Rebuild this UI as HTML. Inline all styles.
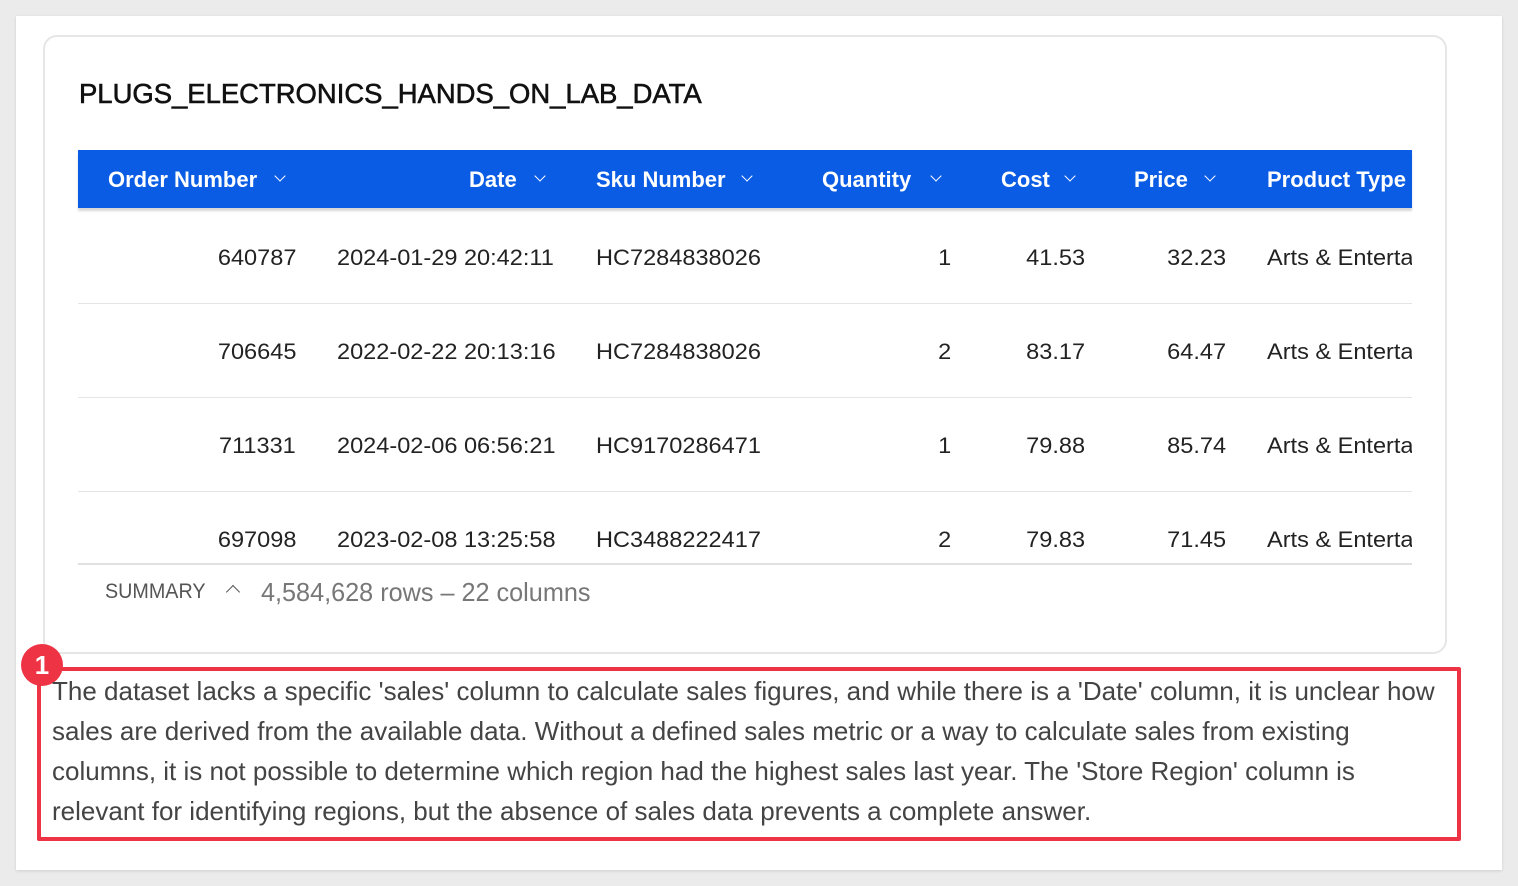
<!DOCTYPE html>
<html><head><meta charset="utf-8"><style>
*{margin:0;padding:0;box-sizing:border-box}
body{width:1518px;height:886px;background:#ebebeb;position:relative;overflow:hidden;font-family:"Liberation Sans",sans-serif}
.panel{position:absolute;left:16px;top:16px;width:1486px;height:854px;background:#fff;box-shadow:0 1px 3px rgba(0,0,0,.12)}
.card{position:absolute;left:43px;top:35px;width:1404px;height:619px;border:2px solid #e6e6e6;border-radius:14px;background:#fff}
.t{position:absolute;white-space:nowrap;transform-origin:left center}
.r{transform-origin:right center}
.hdr{position:absolute;left:78px;top:150px;width:1334px;height:58px;background:#0a5ce4;box-shadow:0 3px 2px #d8d8d8;overflow:hidden}
.h{color:#fff;font-size:22px;font-weight:bold;top:17px}
.chev{position:absolute;top:22px;width:8px;height:8px;border-right:1.5px solid #fff;border-bottom:1.5px solid #fff;transform:rotate(45deg)}
.row{color:#222;font-size:22px;transform:scaleX(1.07)}
.sep{position:absolute;left:78px;width:1334px;height:1px;background:#e4e4e4}
.clip{position:absolute;left:1262px;width:150px;height:40px;overflow:hidden}
.p{color:#444;font-size:26px;left:52px}
</style></head><body>
<div class="panel"></div>
<div class="card"></div>
<div class="t" style="left:79px;top:78px;font-size:28px;color:#111;transform:scaleX(.98);-webkit-text-stroke:.6px #111">PLUGS_ELECTRONICS_HANDS_ON_LAB_DATA</div>
<div class="hdr">
<div class="t h" style="left:30px">Order Number</div><div class="chev" style="left:198px"></div>
<div class="t h" style="left:391px">Date</div><div class="chev" style="left:458px"></div>
<div class="t h" style="left:518px">Sku Number</div><div class="chev" style="left:665px"></div>
<div class="t h" style="left:744px">Quantity</div><div class="chev" style="left:854px"></div>
<div class="t h" style="left:923px">Cost</div><div class="chev" style="left:988px"></div>
<div class="t h" style="left:1056px">Price</div><div class="chev" style="left:1128px"></div>
<div class="t h" style="left:1189px">Product Type</div>
</div>
<div class="t row r" style="right:1222px;top:245px">640787</div>
<div class="t row" style="left:337px;top:245px">2024-01-29 20:42:11</div>
<div class="t row" style="left:596px;top:245px">HC7284838026</div>
<div class="t row r" style="right:567px;top:245px">1</div>
<div class="t row r" style="right:433px;top:245px">41.53</div>
<div class="t row r" style="right:292px;top:245px">32.23</div>
<div class="clip" style="top:241px"><div class="t row" style="left:5px;top:4px">Arts &amp; Entertainment</div></div>
<div class="sep" style="top:303px"></div>

<div class="t row r" style="right:1222px;top:339px">706645</div>
<div class="t row" style="left:337px;top:339px">2022-02-22 20:13:16</div>
<div class="t row" style="left:596px;top:339px">HC7284838026</div>
<div class="t row r" style="right:567px;top:339px">2</div>
<div class="t row r" style="right:433px;top:339px">83.17</div>
<div class="t row r" style="right:292px;top:339px">64.47</div>
<div class="clip" style="top:335px"><div class="t row" style="left:5px;top:4px">Arts &amp; Entertainment</div></div>
<div class="sep" style="top:397px"></div>

<div class="t row r" style="right:1222px;top:433px">711331</div>
<div class="t row" style="left:337px;top:433px">2024-02-06 06:56:21</div>
<div class="t row" style="left:596px;top:433px">HC9170286471</div>
<div class="t row r" style="right:567px;top:433px">1</div>
<div class="t row r" style="right:433px;top:433px">79.88</div>
<div class="t row r" style="right:292px;top:433px">85.74</div>
<div class="clip" style="top:429px"><div class="t row" style="left:5px;top:4px">Arts &amp; Entertainment</div></div>
<div class="sep" style="top:491px"></div>

<div class="t row r" style="right:1222px;top:527px">697098</div>
<div class="t row" style="left:337px;top:527px">2023-02-08 13:25:58</div>
<div class="t row" style="left:596px;top:527px">HC3488222417</div>
<div class="t row r" style="right:567px;top:527px">2</div>
<div class="t row r" style="right:433px;top:527px">79.83</div>
<div class="t row r" style="right:292px;top:527px">71.45</div>
<div class="clip" style="top:523px"><div class="t row" style="left:5px;top:4px">Arts &amp; Entertainment</div></div>
<div class="sep" style="top:563px;height:2px;background:#e0e0e0"></div>

<div class="t" style="left:105px;top:580px;font-size:21px;color:#555;transform:scaleX(.94)">SUMMARY</div>
<div style="position:absolute;left:228px;top:587px;width:10px;height:10px;border-left:1.6px solid #555;border-top:1.6px solid #555;transform:rotate(45deg)"></div>
<div class="t" style="left:261px;top:577px;font-size:26px;color:#777;transform:scaleX(.97)">4,584,628 rows – 22 columns</div>

<div style="position:absolute;left:37px;top:667px;width:1424px;height:174px;border:4px solid #ee3344;border-radius:2px"></div>
<div style="position:absolute;left:21px;top:644px;width:42px;height:42px;border-radius:50%;background:#ee3344;color:#fff;font-weight:bold;font-size:26px;text-align:center;line-height:42px">1</div>
<div class="t p" style="top:676px">The dataset lacks a specific 'sales' column to calculate sales figures, and while there is a 'Date' column, it is unclear how</div>
<div class="t p" style="top:716px">sales are derived from the available data. Without a defined sales metric or a way to calculate sales from existing</div>
<div class="t p" style="top:756px">columns, it is not possible to determine which region had the highest sales last year. The 'Store Region' column is</div>
<div class="t p" style="top:796px">relevant for identifying regions, but the absence of sales data prevents a complete answer.</div>
</body></html>
